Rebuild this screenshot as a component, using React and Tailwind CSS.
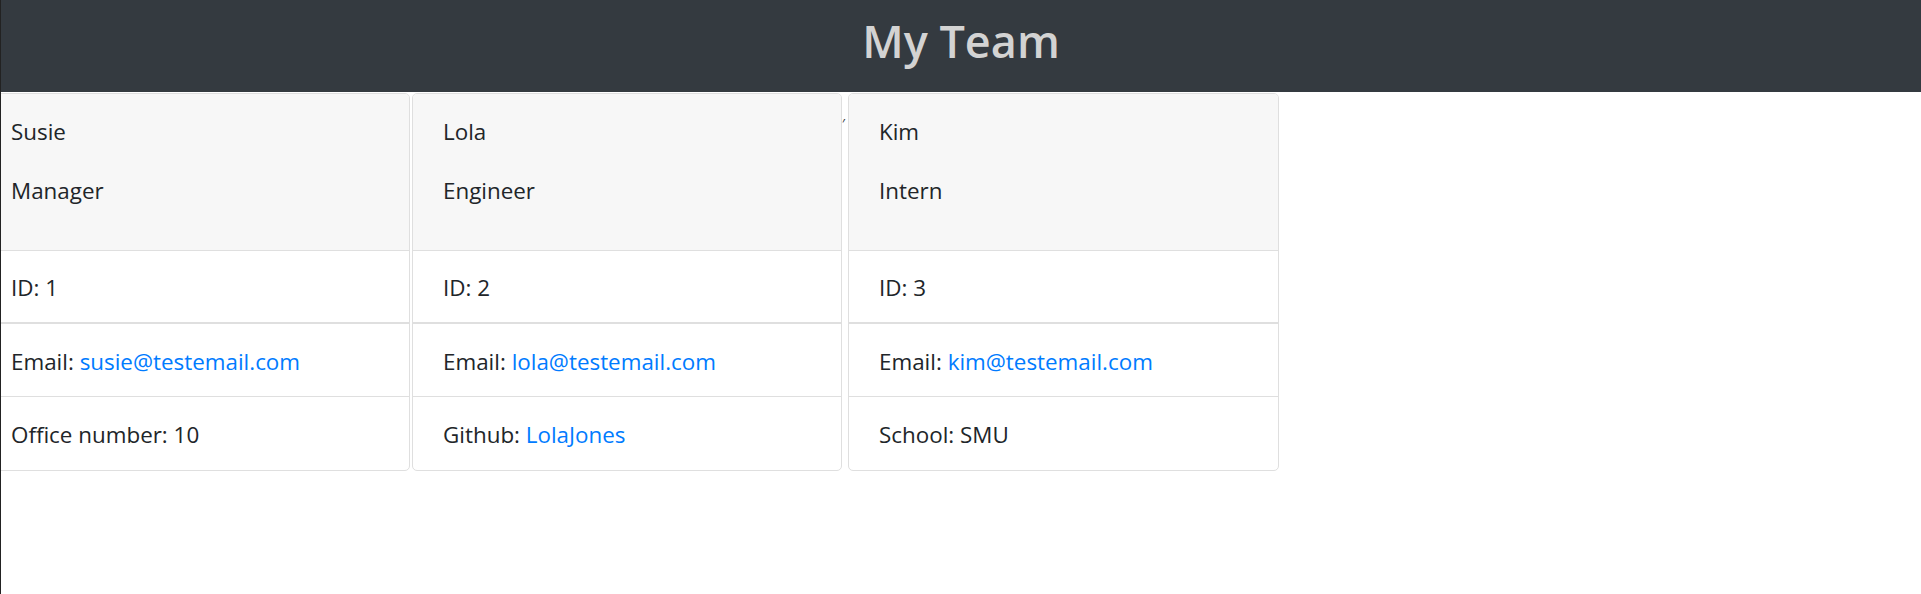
const team = [
  {
    name: "Susie",
    role: "Manager",
    id: 1,
    email: "susie@testemail.com",
    extra: { label: "Office number", value: "10" },
    width: "w-[430px]",
  },
  {
    name: "Lola",
    role: "Engineer",
    id: 2,
    email: "lola@testemail.com",
    extra: { label: "Github", value: "LolaJones", link: true },
    width: "w-[430px]",
  },
  {
    name: "Kim",
    role: "Intern",
    id: 3,
    email: "kim@testemail.com",
    extra: { label: "School", value: "SMU" },
    width: "w-[431px]",
  },
];

function Card({ member }) {
  return (
    <div
      className={`${member.width} shrink-0 rounded-[5px] border border-[#dfdfdf] bg-white overflow-hidden`}
    >
      {/* Card header */}
      <div className="h-[157px] bg-[#f7f7f7] border-b border-[#dfdfdf] px-[30px] pt-[21px]">
        <p className="leading-[33px] mb-[26px]">{member.name}</p>
        <p className="leading-[33px]">{member.role}</p>
      </div>
      {/* List */}
      <div className="h-[73px] border-b-2 border-[#dfdfdf] px-[30px] pt-[2px] flex items-center">
        <span className="leading-[33px]">ID: {member.id}</span>
      </div>
      <div className="h-[73px] border-b border-[#dfdfdf] px-[30px] pt-[2px] flex items-center">
        <span className="leading-[33px]">
          Email: <a className="text-[#007bff]">{member.email}</a>
        </span>
      </div>
      <div className="h-[73px] px-[30px] pt-[2px] flex items-center">
        <span className="leading-[33px]">
          {member.extra.label}:{" "}
          {member.extra.link ? (
            <a className="text-[#007bff]">{member.extra.value}</a>
          ) : (
            member.extra.value
          )}
        </span>
      </div>
    </div>
  );
}

export default function App() {
  return (
    <div
      className="h-[594px] bg-white border-l border-[#222] text-[#212529] text-[22.4px]"
      style={{ fontFamily: '"Open Sans", "Noto Sans", sans-serif' }}
    >
      <div className="h-full overflow-hidden">
        {/* Header */}
        <header className="h-[92px] bg-[#343a40] flex justify-center pt-[18px]">
          <h1 className="text-[45px] leading-none font-semibold text-[#d3d3d3]">My Team</h1>
        </header>

        {/* Cards */}
        <div className="flex items-start mt-[1px] ml-[-21px]">
          <Card member={team[0]} />
          <div className="w-[2px] shrink-0" />
          <Card member={team[1]} />
          <div className="w-[6px] shrink-0 relative">
            <span className="absolute left-[0px] top-[24px] text-[13px] leading-none text-[#212529]">′</span>
          </div>
          <Card member={team[2]} />
        </div>
      </div>
    </div>
  );
}
